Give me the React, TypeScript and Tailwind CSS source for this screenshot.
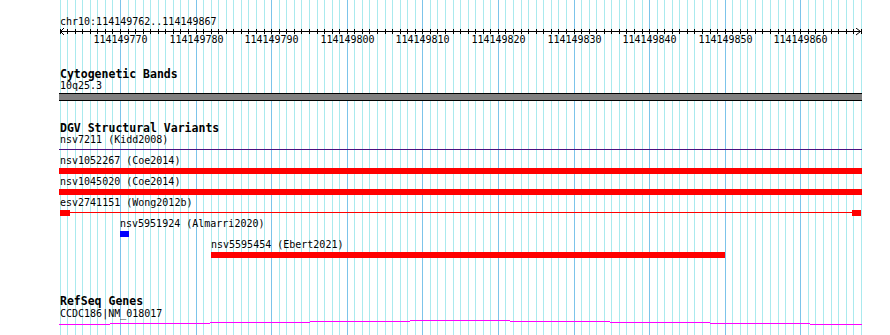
import React from "react";

const BP0 = 114149762;
const NBP = 107;
const X0 = 59.5;
const PX = 7.559;
const xOf = (i: number) => Math.round(X0 + i * PX);

const steps: [number, number, number][] = [
  [59, 110, 4],
  [110, 210, 3],
  [210, 310, 2],
  [310, 410, 1],
  [410, 510, 0],
  [510, 610, 1],
  [610, 710, 2],
  [710, 810, 3],
  [810, 862, 4],
];

function Gridlines() {
  const lines = [];
  for (let i = 0; i < NBP; i++) {
    const major = (BP0 + i) % 10 === 0;
    lines.push(
      <div
        key={i}
        className={`absolute top-0 bottom-0 w-px ${major ? "bg-[#7cc4ea]" : "bg-[#aaeaee]"}`}
        style={{ left: xOf(i) }}
      />
    );
  }
  return <div className="absolute inset-0 pointer-events-none">{lines}</div>;
}

function Ruler() {
  const ticks = [];
  const labels = [];
  for (let i = 0; i < NBP; i++) {
    const x = xOf(i);
    ticks.push(<rect key={i} x={x} y={1} width={1} height={5} fill="#000" />);
    if ((BP0 + i) % 10 === 0) {
      labels.push(
        <div
          key={i}
          className="absolute top-[6px] h-[12px] leading-[12px] -translate-x-1/2 whitespace-nowrap"
          style={{ left: x + 0.5 }}
        >
          {BP0 + i}
        </div>
      );
    }
  }
  return (
    <div className="relative h-[18px]">
      <svg width={890} height={8} className="block" shapeRendering="crispEdges">
        <rect x={60} y={3} width={801} height={1} fill="#000" />
        {ticks}
        <polyline points="64,0 60.5,3.5 64,7" fill="none" stroke="#000" strokeWidth={1} shapeRendering="auto" />
        <polyline points="856,0 860.5,3.5 856,7" fill="none" stroke="#000" strokeWidth={1} shapeRendering="auto" />
      </svg>
      {labels}
    </div>
  );
}

function Label({ left, children }: { left: number; children: React.ReactNode }) {
  return (
    <div className="h-[12px] leading-[12px] whitespace-nowrap" style={{ paddingLeft: left }}>
      {children}
    </div>
  );
}

function Title({ children, className = "" }: { children: React.ReactNode; className?: string }) {
  return (
    <div className={`h-[11px] leading-[11px] text-[11.5px] font-bold pl-[60px] whitespace-nowrap ${className}`}>
      {children}
    </div>
  );
}

export default function App() {
  return (
    <div className="relative w-[890px] h-[335px] overflow-hidden bg-white text-black text-[10px] font-['DejaVu_Sans_Mono',monospace]">
      <Gridlines />
      <div className="relative flex flex-col">
        <div className="mt-[16px]">
          <Label left={60}>chr10:114149762..114149867</Label>
        </div>
        <Ruler />

        <Title className="mt-[23px]">Cytogenetic Bands</Title>
        <Label left={60}>10q25.3</Label>
        <div className="mt-[1px] ml-[59px] w-[803px] h-[8px] border-y border-black bg-[#808080]" />

        <Title className="mt-[22px]">DGV Structural Variants</Title>

        {/* nsv7211 */}
        <div className="h-[21px]">
          <Label left={60}>nsv7211 (Kidd2008)</Label>
          <div className="mt-[1px] ml-[59px] w-[803px] h-[6px] pt-[2px]">
            <div className="h-px bg-[#4a1080]" />
          </div>
        </div>

        {/* nsv1052267 */}
        <div className="h-[21px]">
          <Label left={60}>nsv1052267 (Coe2014)</Label>
          <div className="mt-[1px] ml-[59px] w-[803px] h-[6px] bg-[#ff0000]" />
        </div>

        {/* nsv1045020 */}
        <div className="h-[21px]">
          <Label left={60}>nsv1045020 (Coe2014)</Label>
          <div className="mt-[1px] ml-[59px] w-[803px] h-[6px] bg-[#ff0000]" />
        </div>

        {/* esv2741151 */}
        <div className="h-[21px]">
          <Label left={60}>esv2741151 (Wong2012b)</Label>
          <div className="mt-[1px] ml-[59px] w-[803px] h-[6px] flex items-start">
            <div className="w-[10px] h-[6px] bg-[#ff0000] ml-[1px]" />
            <div className="flex-1 h-px mt-[2px] bg-[#ff0000]" />
            <div className="w-[9px] h-[6px] bg-[#ff0000] mr-[1px]" />
          </div>
        </div>

        {/* nsv5951924 */}
        <div className="h-[21px]">
          <Label left={120}>nsv5951924 (Almarri2020)</Label>
          <div className="mt-[1px] ml-[120px] w-[9px] h-[6px] bg-[#0000ff]" />
        </div>

        {/* nsv5595454 */}
        <div className="h-[21px]">
          <Label left={211}>nsv5595454 (Ebert2021)</Label>
          <div className="mt-[1px] ml-[211px] w-[514px] h-[6px] bg-[#ff0000]" />
        </div>

        <Title className="mt-[36px]">RefSeq Genes</Title>
        <div className="mt-[1px]">
          <Label left={60}>CCDC186|NM_018017</Label>
        </div>
        <svg width={890} height={6} className="block" shapeRendering="crispEdges">
          {steps.map(([a, b, y], k) => (
            <rect key={k} x={a} y={y} width={b - a} height={1} fill="#ff00ff" />
          ))}
        </svg>
      </div>
    </div>
  );
}
